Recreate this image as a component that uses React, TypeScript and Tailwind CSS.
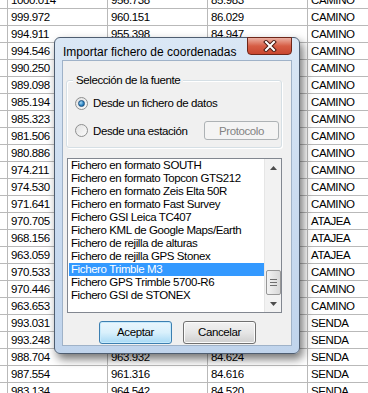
import React from 'react';

// rows 3..20 of the middle columns sit under the dialog, so they are left empty
const rows: string[][] = [
  ['1000.014', '956.738', '85.983', 'CAMINO'],
  ['999.972', '960.151', '86.029', 'CAMINO'],
  ['994.911', '955.398', '84.947', 'CAMINO'],
  ['994.546', '', '', 'CAMINO'],
  ['990.250', '', '', 'CAMINO'],
  ['989.098', '', '', 'CAMINO'],
  ['985.194', '', '', 'CAMINO'],
  ['985.323', '', '', 'CAMINO'],
  ['981.506', '', '', 'CAMINO'],
  ['980.886', '', '', 'CAMINO'],
  ['974.211', '', '', 'CAMINO'],
  ['974.530', '', '', 'CAMINO'],
  ['971.641', '', '', 'CAMINO'],
  ['970.705', '', '', 'ATAJEA'],
  ['968.156', '', '', 'ATAJEA'],
  ['963.059', '', '', 'ATAJEA'],
  ['970.533', '', '', 'CAMINO'],
  ['970.446', '', '', 'CAMINO'],
  ['963.653', '', '', 'CAMINO'],
  ['993.031', '', '', 'SENDA'],
  ['993.248', '', '', 'SENDA'],
  ['988.704', '963.932', '84.624', 'SENDA'],
  ['987.554', '961.316', '84.616', 'SENDA'],
  ['983.134', '964.542', '84.520', 'SENDA'],
];

const items = [
  'Fichero en formato SOUTH',
  'Fichero en formato Topcon GTS212',
  'Fichero en formato Zeis Elta 50R',
  'Fichero en formato Fast Survey',
  'Fichero GSI Leica TC407',
  'Fichero KML de Google Maps/Earth',
  'Fichero de rejilla de alturas',
  'Fichero de rejilla GPS Stonex',
  'Fichero Trimble M3',
  'Fichero GPS Trimble 5700-R6',
  'Fichero GSI de STONEX',
];

const Radio: React.FC<{ checked?: boolean }> = ({ checked }) => (
  <span className="w-[13px] h-[13px] rounded-full border border-[#8e8f8f] bg-gradient-to-br from-[#e2e2e2] to-[#fbfbfb] flex items-center justify-center shrink-0">
    {checked && (
      <span className="w-[7px] h-[7px] rounded-full bg-[radial-gradient(circle_at_35%_35%,#a9dbf6,#2a81c1_60%,#1b5e94)] border border-[#1c5180]" />
    )}
  </span>
);

const App: React.FC = () => {
  return (
    <div className="relative w-[368px] h-[393px] overflow-hidden bg-white text-black text-[11.5px] tracking-[-0.4px] font-['Liberation_Sans',Arial,sans-serif]">
      <div className="-mt-[8px]">
        {rows.map((r, i) => (
          <div key={i} className="flex h-[17px] border-b border-[#b9b9b9] leading-[16px] whitespace-nowrap">
            <div className="w-[8px] border-r border-[#b9b9b9] shrink-0" />
            {r.map((c, j) => (
              <div key={j} className="w-[100px] shrink-0 border-r border-[#b9b9b9] pl-[3px]">{c}</div>
            ))}
          </div>
        ))}
      </div>

      <div className="absolute left-[54px] top-[37px] w-[246px] h-[317px] rounded-[6px] border border-[#4e5d70] bg-gradient-to-b from-[#dae7f5] via-[#cbdcf0] to-[#c0d4ec] shadow-[3px_5px_10px_rgba(0,0,0,0.55)] flex flex-col px-[7px] pb-[7px]">
        <div className="h-[22px] flex items-start justify-between">
          <span className="mt-[7px] ml-[1px] text-[12px] leading-[14px] tracking-normal whitespace-nowrap">Importar fichero de coordenadas</span>
          <div className="-mt-px w-[45px] h-[18px] rounded-b-[4px] border border-[#6e2619] bg-gradient-to-b from-[#eab0a3] via-[#d65d45] to-[#c9462f] flex items-center justify-center">
            <svg width="14" height="12" viewBox="0 0 14 12">
              <path d="M3 2 L11 10 M11 2 L3 10" stroke="#4a1a12" strokeWidth="4" strokeLinecap="square" />
              <path d="M3 2 L11 10 M11 2 L3 10" stroke="#ffffff" strokeWidth="2" strokeLinecap="square" />
            </svg>
          </div>
        </div>

        <div className="flex-1 bg-[#f0f0f0] border border-[#9fb2c8] flex flex-col pl-[3px] pt-[19px]">
          <div className="relative w-[216px] h-[68px] rounded-[3px] border border-[#d5dfe5] shadow-[inset_1px_1px_0_#fff,1px_1px_0_#fff] flex flex-col pl-[8px] pt-[14px] gap-[10px]">
            <span className="absolute left-[6px] -top-[9px] px-[3px] bg-[#f0f0f0] leading-[16px] whitespace-nowrap">Selección de la fuente</span>
            <div className="flex items-center gap-[5px] leading-[16px] whitespace-nowrap">
              <Radio checked />
              <span>Desde un fichero de datos</span>
            </div>
            <div className="flex items-center gap-[5px] leading-[16px] whitespace-nowrap">
              <Radio />
              <span>Desde una estación</span>
              <div className="ml-auto mr-[2px] w-[75px] h-[19px] border border-[#adb2b5] rounded-[3px] bg-[#f4f4f4] text-[#838383] flex items-center justify-center leading-[16px]">Protocolo</div>
            </div>
          </div>

          <div className="mt-[10px] ml-[1px] w-[215px] h-[155px] border border-[#828790] bg-white flex">
            <div className="flex-1 flex flex-col pl-[1px]">
              {items.map((t, i) => (
                <div key={i} className={`h-[13px] leading-[13px] pl-[2px] whitespace-nowrap overflow-hidden ${i === 8 ? 'bg-[#3399ff] text-white' : ''}`}>{t}</div>
              ))}
            </div>
            <div className="w-[17px] bg-[#f2f2f2] border-l border-[#e6e6e6] flex flex-col justify-between items-center">
              <div className="h-[17px] w-full flex items-center justify-center">
                <svg width="7" height="4" viewBox="0 0 7 4"><path d="M0 4 L3.5 0 L7 4 Z" fill="#4d4d4d" /></svg>
              </div>
              <div className="flex flex-col w-full items-center">
                <div className="w-[15px] h-[25px] rounded-[2px] border border-[#979797] bg-gradient-to-r from-[#f3f3f3] to-[#d8d8d8] flex flex-col items-center justify-center gap-[2px]">
                  <span className="w-[7px] h-px bg-[#6e6e6e]" />
                  <span className="w-[7px] h-px bg-[#6e6e6e]" />
                  <span className="w-[7px] h-px bg-[#6e6e6e]" />
                </div>
                <div className="h-[17px] w-full flex items-center justify-center">
                  <svg width="7" height="4" viewBox="0 0 7 4"><path d="M0 0 L3.5 4 L7 0 Z" fill="#4d4d4d" /></svg>
                </div>
              </div>
            </div>
          </div>

          <div className="mt-[8px] flex gap-[11px] pl-[33px]">
            <div className="w-[73px] h-[23px] rounded-[3px] border border-[#3c7fb1] bg-gradient-to-b from-[#eaf6fd] via-[#d9f0fc] to-[#a7d9f5] shadow-[inset_0_0_0_1px_#c6eafc] flex items-center justify-center">Aceptar</div>
            <div className="w-[73px] h-[23px] rounded-[3px] border border-[#707070] bg-gradient-to-b from-[#f2f2f2] via-[#e6e6e6] to-[#cfcfcf] shadow-[inset_0_0_0_1px_#fbfbfb] flex items-center justify-center">Cancelar</div>
          </div>
        </div>
      </div>
    </div>
  );
};

export default App;
